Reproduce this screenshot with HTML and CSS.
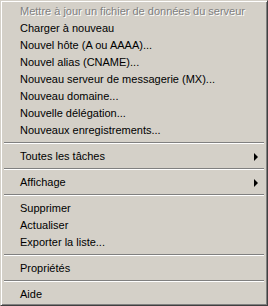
FILE: index.html
```html
<!DOCTYPE html>
<html lang="fr">
<head>
<meta charset="UTF-8">
<title>Menu contextuel</title>
<link rel="stylesheet" href="styles.css">
</head>
<body>
  <div class="menu">
    <div class="item disabled">Mettre à jour un fichier de données du serveur</div>
    <div class="item">Charger à nouveau</div>
    <div class="item">Nouvel hôte (A ou AAAA)...</div>
    <div class="item">Nouvel alias (CNAME)...</div>
    <div class="item">Nouveau serveur de messagerie (MX)...</div>
    <div class="item">Nouveau domaine...</div>
    <div class="item">Nouvelle délégation...</div>
    <div class="item">Nouveaux enregistrements...</div>
    <div class="sep"></div>
    <div class="item sub">Toutes les tâches</div>
    <div class="sep"></div>
    <div class="item sub">Affichage</div>
    <div class="sep"></div>
    <div class="item">Supprimer</div>
    <div class="item">Actualiser</div>
    <div class="item">Exporter la liste...</div>
    <div class="sep"></div>
    <div class="item">Propriétés</div>
    <div class="sep"></div>
    <div class="item">Aide</div>
  </div>
</body>
</html>
```

FILE: styles.css
```css
body {
  margin: 0;
  padding: 0;
  background-color: #d4d0c8;
}

.menu {
  box-sizing: border-box;
  width: 268px;
  height: 306px;
  background-color: #d4d0c8;
  border-top: 1px solid #d4d0c8;
  border-left: 1px solid #d4d0c8;
  border-right: 1px solid #404040;
  border-bottom: 1px solid #404040;
  box-shadow: inset 1px 1px 0 #ffffff, inset -1px -1px 0 #808080;
  padding: 2px 2px 2px 2px;
  font-family: "Liberation Sans", Arial, sans-serif;
  font-size: 11px;
  color: #000000;
}

.item {
  position: relative;
  height: 17px;
  line-height: 17px;
  padding-left: 17px;
  white-space: nowrap;
}

.item.disabled {
  color: #808080;
  text-shadow: 1px 1px 0 #ffffff;
}

.item.sub::after {
  content: "";
  position: absolute;
  right: 7px;
  top: 5px;
  border-top: 4px solid transparent;
  border-bottom: 4px solid transparent;
  border-left: 4px solid #000000;
}

.sep {
  height: 9px;
  padding: 3px 1px 0 1px;
  box-sizing: border-box;
}

.sep::before {
  content: "";
  display: block;
  height: 1px;
  background-color: #808080;
  border-bottom: 1px solid #ffffff;
}
```
